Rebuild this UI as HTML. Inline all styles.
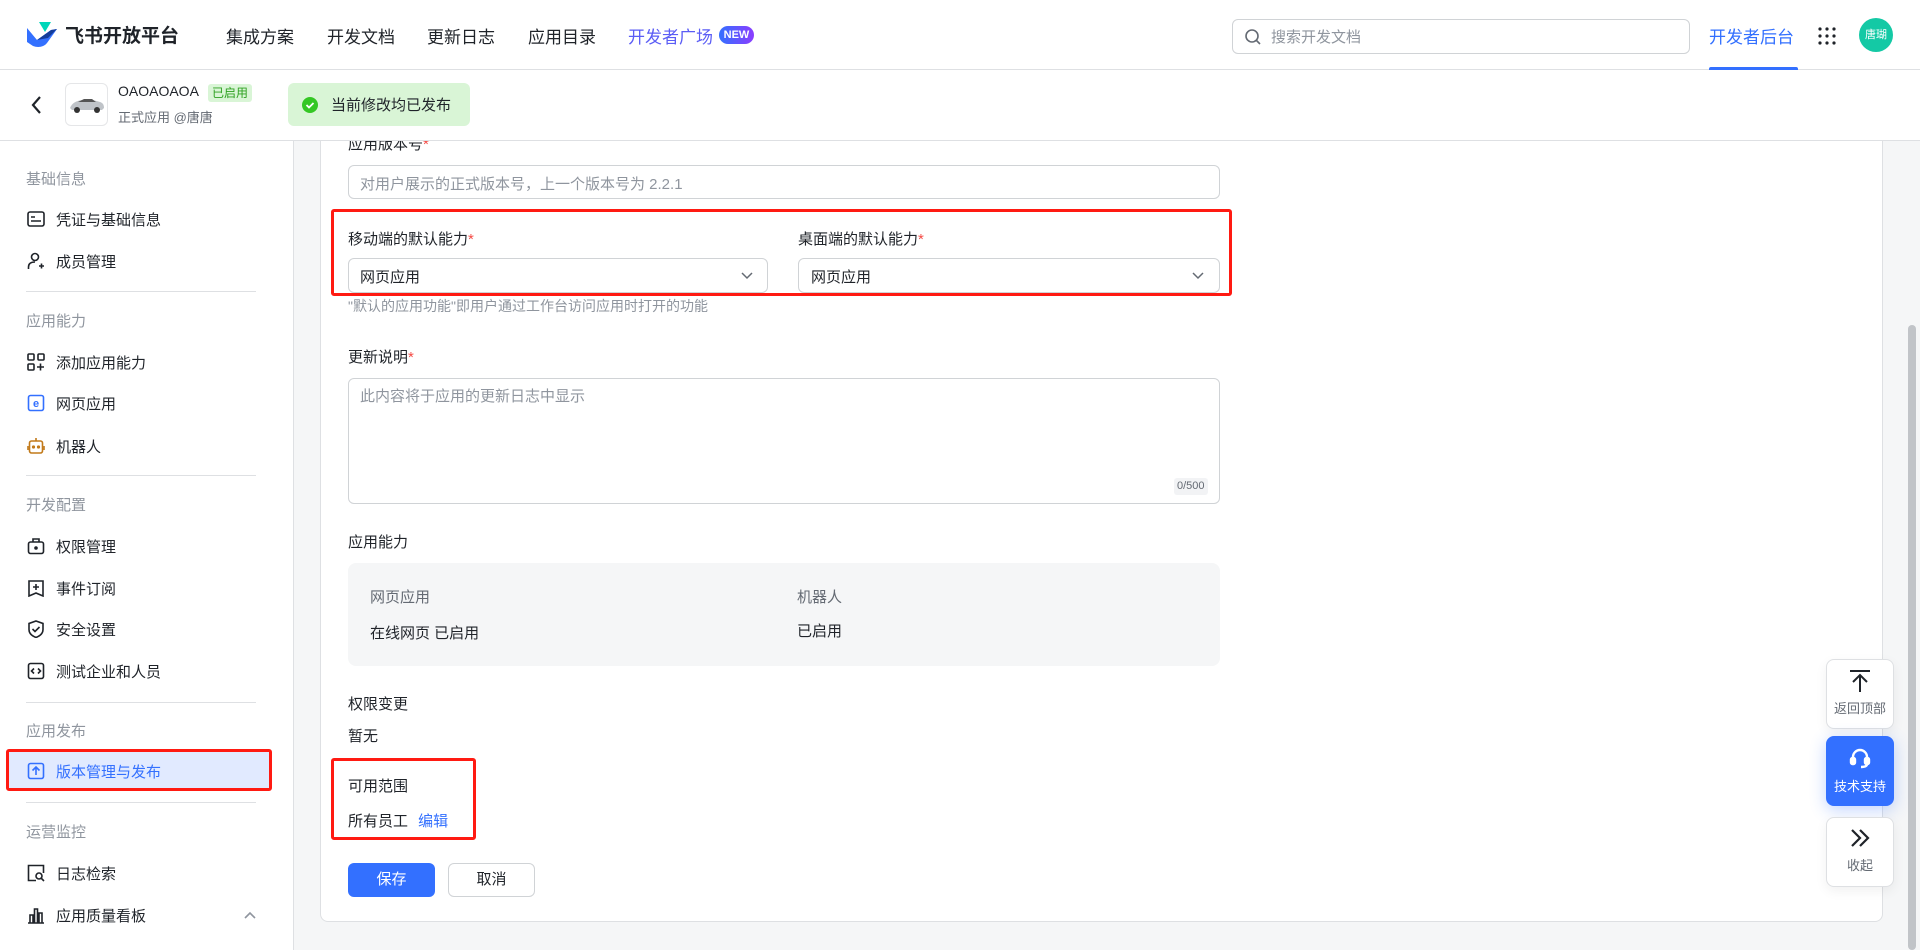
<!DOCTYPE html>
<html><head><meta charset="utf-8"><style>
*{box-sizing:border-box;margin:0;padding:0}
body{width:1920px;height:950px;overflow:hidden;background:#f5f6f7;font-family:"Liberation Sans","Noto Sans CJK SC",sans-serif;color:#1f2329;position:relative;font-size:15px}
.a{position:absolute;white-space:nowrap}
.hdr{left:0;top:0;width:1920px;height:70px;background:#fff;border-bottom:1px solid #dee0e3;z-index:5}
.nav{font-size:17px;top:23px;color:#1f2329}
.bar{left:0;top:70px;width:1920px;height:71px;background:#fff;border-bottom:1px solid #dee0e3;z-index:5}
.side{left:0;top:141px;width:294px;height:809px;background:#fff;border-right:1px solid #dee0e3}
.g{color:#8f959e;font-size:15px;left:26px}
.it{font-size:15px;left:56px;color:#1f2329}
.ic{left:27px;width:18px;height:18px}
.dv{left:26px;width:230px;height:1px;background:#dee0e3}
.card{left:320px;top:100px;width:1563px;height:822px;background:#fff;border:1px solid #dee0e3;border-radius:8px}
.lab{font-size:15px;left:348px}
.req{color:#f54a45}
.inp{background:#fff;border:1px solid #d0d3d6;border-radius:6px}
.ph{color:#8f959e}
.rb{border:3px solid #ff1a12;border-radius:3px}
.fb{left:1826px;width:68px;height:70px;background:#fff;border:1px solid #dee0e3;border-radius:8px;font-size:13px;text-align:center;color:#646a73;box-shadow:0 4px 12px rgba(0,0,0,.06)}
</style></head><body>
<div class="a hdr">
 <svg class="a" style="left:27px;top:22px" width="32" height="26" viewBox="0 0 32 26"><path d="M12 0h12l-6 10z" fill="#00d6b9"/><path d="M0 6l10 12 14-10 6-1-10 14c-3 4-9 5-14 3L0 20z" fill="#3370ff"/><path d="M10 18l14-10 6-1-9 9z" fill="#133c9a"/></svg>
 <div class="a" style="left:65px;top:21px;font-size:19px;font-weight:bold;color:#1f2329">飞书开放平台</div>
 <div class="a nav" style="left:226px">集成方案</div>
 <div class="a nav" style="left:327px">开发文档</div>
 <div class="a nav" style="left:427px">更新日志</div>
 <div class="a nav" style="left:528px">应用目录</div>
 <div class="a nav" style="left:628px;color:#5b5df5">开发者广场</div>
 <div class="a" style="left:719px;top:26px;width:35px;height:18px;border-radius:9px;background:linear-gradient(90deg,#3370ff,#8b3dff);color:#fff;font-size:11px;font-weight:bold;text-align:center;line-height:18px">NEW</div>
 <div class="a inp" style="left:1232px;top:19px;width:458px;height:35px"></div>
 <svg class="a" style="left:1244px;top:28px" width="18" height="18" viewBox="0 0 18 18"><circle cx="8" cy="8" r="6" fill="none" stroke="#646a73" stroke-width="1.6"/><path d="M12.5 12.5l3.5 3.5" stroke="#646a73" stroke-width="1.6"/></svg>
 <div class="a ph" style="left:1271px;top:26px;font-size:15px">搜索开发文档</div>
 <div class="a" style="left:1709px;top:23px;font-size:17px;color:#3370ff">开发者后台</div>
 <div class="a" style="left:1709px;top:67px;width:89px;height:4px;background:#3370ff;border-radius:2px 2px 0 0"></div>
 <svg class="a" style="left:1818px;top:27px" width="18" height="18" viewBox="0 0 18 18" fill="#1f2329"><circle cx="2" cy="2" r="1.6"/><circle cx="9" cy="2" r="1.6"/><circle cx="16" cy="2" r="1.6"/><circle cx="2" cy="9" r="1.6"/><circle cx="9" cy="9" r="1.6"/><circle cx="16" cy="9" r="1.6"/><circle cx="2" cy="16" r="1.6"/><circle cx="9" cy="16" r="1.6"/><circle cx="16" cy="16" r="1.6"/></svg>
 <div class="a" style="left:1859px;top:18px;width:34px;height:34px;border-radius:50%;background:#14c9a5;color:#fff;font-size:11px;text-align:center;line-height:34px">唐瑚</div>
</div>
<div class="a bar">
 <svg class="a" style="left:30px;top:25px" width="14" height="20" viewBox="0 0 14 20"><path d="M10 2L3 10l7 8" fill="none" stroke="#1f2329" stroke-width="2.2"/></svg>
 <div class="a" style="left:65px;top:13px;width:43px;height:43px;border:1px solid #e5e6e8;border-radius:6px;background:#fff"><svg width="41" height="41" viewBox="0 0 41 41"><path d="M4 24c2-5 6-7 12-8 6-1 12 0 18 2 3 1 4 3 4 6l-2 2H6z" fill="#bfc3c8"/><path d="M12 18l6-3h8l4 3z" fill="#555"/><circle cx="11" cy="26" r="3" fill="#333"/><circle cx="31" cy="26" r="3" fill="#333"/></svg></div>
 <div class="a" style="left:118px;top:13px;font-size:14px">OAOAOAOA</div>
 <div class="a" style="left:208px;top:14px;padding:0 4px;height:18px;line-height:18px;background:#d9f5d6;color:#2ea121;font-size:12px;border-radius:3px">已启用</div>
 <div class="a" style="left:118px;top:37px;font-size:13px;color:#646a73">正式应用 @唐唐</div>
 <div class="a" style="left:288px;top:13px;width:182px;height:43px;background:#d9f5d6;border-radius:6px"></div>
 <svg class="a" style="left:302px;top:27px" width="16" height="16" viewBox="0 0 16 16"><circle cx="8" cy="8" r="8" fill="#34c724"/><path d="M4.5 8l2.5 2.5 4.5-4.5" fill="none" stroke="#fff" stroke-width="1.8"/></svg>
 <div class="a" style="left:331px;top:24px;font-size:15px">当前修改均已发布</div>
</div>
<div class="a side"></div>
<div class="a g" style="top:168px">基础信息</div>
<svg class="a ic" style="top:210px" viewBox="0 0 18 18" fill="none" stroke="#1f2329" stroke-width="1.6"><rect x="1" y="2" width="16" height="14" rx="2"/><path d="M4 7h4M4 11h10"/></svg>
<div class="a it" style="top:209px">凭证与基础信息</div>
<svg class="a ic" style="top:252px" viewBox="0 0 18 18" fill="none" stroke="#1f2329" stroke-width="1.6"><circle cx="8" cy="5" r="3.5"/><path d="M1.5 17v-2c0-3 2-5 6.5-5M12 14h5M14.5 11.5v5"/></svg>
<div class="a it" style="top:251px">成员管理</div>
<div class="a dv" style="top:291px"></div>
<div class="a g" style="top:310px">应用能力</div>
<svg class="a ic" style="top:353px" viewBox="0 0 18 18" fill="none" stroke="#1f2329" stroke-width="1.6"><rect x="1" y="1" width="6" height="6" rx="1"/><rect x="11" y="1" width="6" height="6" rx="1"/><rect x="1" y="11" width="6" height="6" rx="1"/><path d="M10 14h7M13.5 10.5v7"/></svg>
<div class="a it" style="top:352px">添加应用能力</div>
<svg class="a ic" style="top:394px" viewBox="0 0 18 18"><rect x="1.5" y="1.5" width="15" height="15" rx="2" fill="none" stroke="#3370ff" stroke-width="1.6"/><text x="9" y="13" text-anchor="middle" font-size="11" font-weight="bold" fill="#3370ff" font-family="Liberation Sans">e</text></svg>
<div class="a it" style="top:393px">网页应用</div>
<svg class="a ic" style="top:437px" viewBox="0 0 18 18" fill="none" stroke="#c27a1a" stroke-width="1.6"><rect x="2.5" y="4" width="13" height="12" rx="2"/><path d="M9 1v3M1 9v4M17 9v4"/><circle cx="6.5" cy="10" r=".8" fill="#c27a1a"/><circle cx="11.5" cy="10" r=".8" fill="#c27a1a"/></svg>
<div class="a it" style="top:436px">机器人</div>
<div class="a dv" style="top:475px"></div>
<div class="a g" style="top:494px">开发配置</div>
<svg class="a ic" style="top:537px" viewBox="0 0 18 18" fill="none" stroke="#1f2329" stroke-width="1.6"><rect x="1.5" y="5" width="15" height="11.5" rx="2"/><path d="M6 5V2h6v3"/><circle cx="9" cy="11" r="1" fill="#1f2329"/></svg>
<div class="a it" style="top:536px">权限管理</div>
<svg class="a ic" style="top:579px" viewBox="0 0 18 18" fill="none" stroke="#1f2329" stroke-width="1.6"><path d="M2 2h14v15l-7-3-7 3z"/><path d="M6 8h6M9 5v6"/></svg>
<div class="a it" style="top:578px">事件订阅</div>
<svg class="a ic" style="top:620px" viewBox="0 0 18 18" fill="none" stroke="#1f2329" stroke-width="1.6"><path d="M9 1l7 2.5v6c0 4-3 6.5-7 8-4-1.5-7-4-7-8v-6z"/><path d="M5.5 9l2.5 2.5 4.5-4.5"/></svg>
<div class="a it" style="top:619px">安全设置</div>
<svg class="a ic" style="top:662px" viewBox="0 0 18 18" fill="none" stroke="#1f2329" stroke-width="1.6"><rect x="1.5" y="1.5" width="15" height="15" rx="2"/><path d="M7 6.5L4.5 9 7 11.5M11 6.5L13.5 9 11 11.5"/></svg>
<div class="a it" style="top:661px">测试企业和人员</div>
<div class="a dv" style="top:702px"></div>
<div class="a g" style="top:720px">应用发布</div>
<div class="a" style="left:6px;top:749px;width:266px;height:42px;background:#e1eaff;border:3px solid #ff1a12;border-radius:3px"></div>
<svg class="a ic" style="top:762px" viewBox="0 0 18 18" fill="none" stroke="#3370ff" stroke-width="1.6"><rect x="1.5" y="1.5" width="15" height="15" rx="2"/><path d="M9 13V5M5.5 8.5L9 5l3.5 3.5"/></svg>
<div class="a it" style="top:761px;color:#3370ff">版本管理与发布</div>
<div class="a dv" style="top:802px"></div>
<div class="a g" style="top:821px">运营监控</div>
<svg class="a ic" style="top:864px" viewBox="0 0 18 18" fill="none" stroke="#1f2329" stroke-width="1.6"><path d="M9 16.5H1.5v-15h15V9"/><circle cx="12" cy="12" r="3"/><path d="M14 14l3 3"/></svg>
<div class="a it" style="top:863px">日志检索</div>
<svg class="a ic" style="top:906px" viewBox="0 0 18 18" fill="none" stroke="#1f2329" stroke-width="1.6"><path d="M1 17h16M3 17V9h3v8M7.5 17V3h3v14M12 17V7h3v10"/></svg>
<div class="a it" style="top:905px">应用质量看板</div>
<svg class="a" style="left:243px;top:910px" width="14" height="10" viewBox="0 0 14 10"><path d="M2 8l5-5 5 5" fill="none" stroke="#8f959e" stroke-width="1.6"/></svg>

<div class="a card"></div>
<div class="a lab" style="top:133px">应用版本号<span class="req">*</span></div>
<div class="a inp" style="left:348px;top:165px;width:872px;height:34px"></div>
<div class="a ph" style="left:360px;top:173px;font-size:15px">对用户展示的正式版本号，上一个版本号为 2.2.1</div>
<div class="a rb" style="left:331px;top:209px;width:901px;height:87px"></div>
<div class="a lab" style="top:228px">移动端的默认能力<span class="req">*</span></div>
<div class="a lab" style="left:798px;top:228px">桌面端的默认能力<span class="req">*</span></div>
<div class="a inp" style="left:348px;top:258px;width:420px;height:35px"></div>
<div class="a inp" style="left:798px;top:258px;width:422px;height:35px"></div>
<div class="a" style="left:360px;top:266px;font-size:15px">网页应用</div>
<div class="a" style="left:811px;top:266px;font-size:15px">网页应用</div>
<svg class="a" style="left:741px;top:271px" width="12" height="9" viewBox="0 0 12 9"><path d="M1 2l5 5 5-5" fill="none" stroke="#646a73" stroke-width="1.5"/></svg>
<svg class="a" style="left:1192px;top:271px" width="12" height="9" viewBox="0 0 12 9"><path d="M1 2l5 5 5-5" fill="none" stroke="#646a73" stroke-width="1.5"/></svg>
<div class="a ph" style="left:348px;top:296px;font-size:14px">"默认的应用功能"即用户通过工作台访问应用时打开的功能</div>
<div class="a lab" style="top:346px">更新说明<span class="req">*</span></div>
<div class="a inp" style="left:348px;top:378px;width:872px;height:126px"></div>
<div class="a ph" style="left:360px;top:385px;font-size:15px">此内容将于应用的更新日志中显示</div>
<div class="a" style="left:1174px;top:478px;padding:0 3px;height:17px;line-height:17px;background:#f2f3f5;color:#646a73;font-size:11px;border-radius:3px">0/500</div>
<div class="a lab" style="top:531px">应用能力</div>
<div class="a" style="left:348px;top:563px;width:872px;height:103px;background:#f5f6f7;border-radius:8px"></div>
<div class="a" style="left:370px;top:586px;color:#646a73">网页应用</div>
<div class="a" style="left:797px;top:586px;color:#646a73">机器人</div>
<div class="a" style="left:370px;top:622px">在线网页 已启用</div>
<div class="a" style="left:797px;top:620px">已启用</div>
<div class="a lab" style="top:693px">权限变更</div>
<div class="a lab" style="top:725px">暂无</div>
<div class="a rb" style="left:331px;top:758px;width:145px;height:82px"></div>
<div class="a lab" style="top:775px">可用范围</div>
<div class="a lab" style="top:810px">所有员工 <span style="color:#3370ff;margin-left:6px">编辑</span></div>
<div class="a" style="left:348px;top:863px;width:87px;height:34px;background:#3370ff;border-radius:6px;color:#fff;text-align:center;line-height:34px">保存</div>
<div class="a" style="left:448px;top:863px;width:87px;height:34px;background:#fff;border:1px solid #d0d3d6;border-radius:6px;text-align:center;line-height:32px">取消</div>

<div class="a" style="left:1908px;top:325px;width:8px;height:625px;background:#c1c4c8;border-radius:4px"></div>
<div class="a fb" style="top:659px"><svg style="margin-top:8px" width="26" height="26" viewBox="0 0 26 26" fill="none" stroke="#1f2329" stroke-width="2"><path d="M3 3h20M13 24V8M6 14l7-7 7 7"/></svg><div style="margin-top:1px">返回顶部</div></div>
<div class="a fb" style="top:736px;background:#3370ff;border-color:#3370ff;color:#fff;box-shadow:0 4px 16px rgba(51,112,255,.3)"><svg style="margin-top:9px" width="24" height="24" viewBox="0 0 24 24" fill="none" stroke="#fff" stroke-width="2.4"><path d="M5 14v-3a7 7 0 0114 0v3"/><rect x="3" y="12" width="4" height="6" rx="1.5" fill="#fff"/><rect x="17" y="12" width="4" height="6" rx="1.5" fill="#fff"/><path d="M19 18c0 2-2 3-6 3"/></svg><div style="margin-top:3px">技术支持</div></div>
<div class="a fb" style="top:817px"><svg style="margin-top:9px" width="24" height="22" viewBox="0 0 24 22" fill="none" stroke="#1f2329" stroke-width="2.2"><path d="M4 3l8 8-8 8M12 3l8 8-8 8"/></svg><div style="margin-top:3px">收起</div></div>
</body></html>
